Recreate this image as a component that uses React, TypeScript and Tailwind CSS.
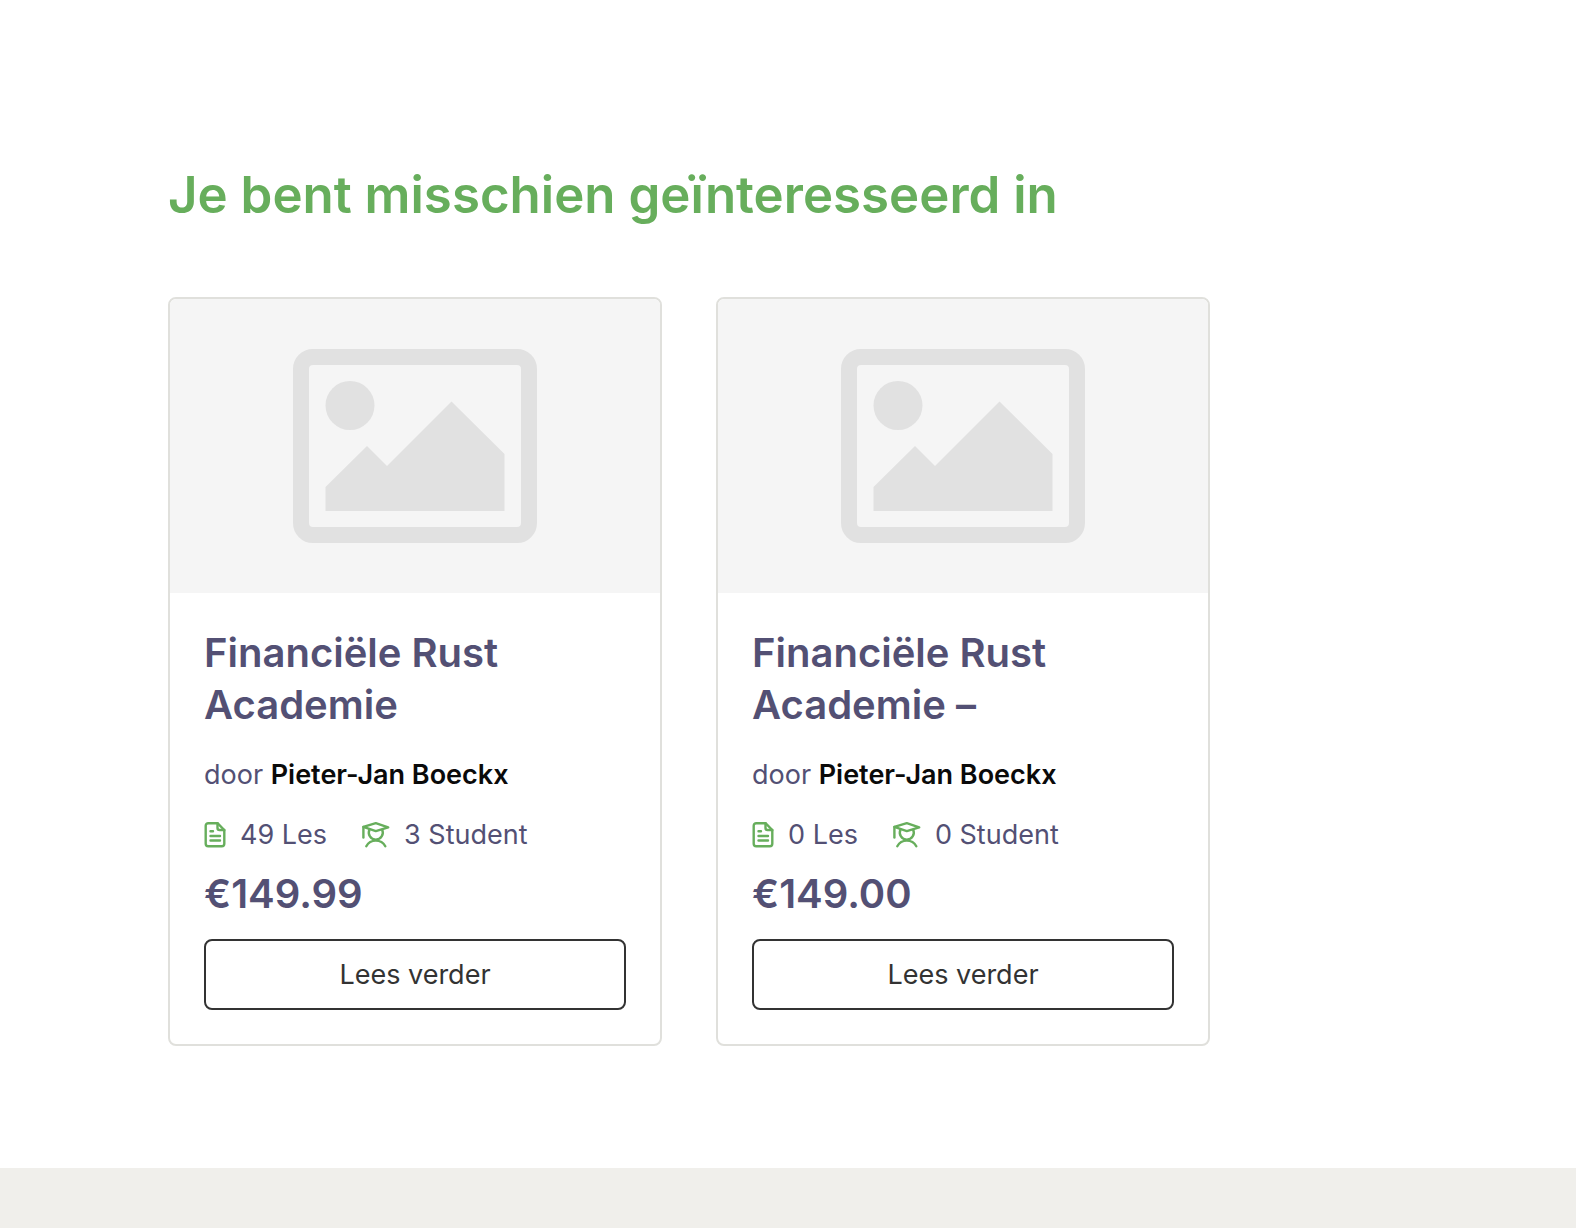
import React from 'react';

interface Course {
  title: string;
  author: string;
  lessons: number;
  students: number;
  price: string;
}

const courses: Course[] = [
  {
    title: 'Financiële Rust Academie',
    author: 'Pieter-Jan Boeckx',
    lessons: 49,
    students: 3,
    price: '€149.99',
  },
  {
    title: 'Financiële Rust Academie –',
    author: 'Pieter-Jan Boeckx',
    lessons: 0,
    students: 0,
    price: '€149.00',
  },
];

const PlaceholderImage: React.FC = () => (
  <svg viewBox="0 0 490 294" className="block w-full bg-[#f5f5f5]" aria-hidden="true">
    <rect x="131" y="58" width="228" height="178" rx="12" fill="none" stroke="#e1e1e1" strokeWidth="16" />
    <circle cx="180" cy="106.5" r="24.5" fill="#e1e1e1" />
    <path d="M155.5 188 197 147 217 167 281.5 102.5 334.5 155v57h-179z" fill="#e1e1e1" />
  </svg>
);

const LessonIcon: React.FC = () => (
  <svg
    width="22"
    height="26"
    viewBox="0 0 22 26"
    fill="none"
    stroke="#67ae5c"
    strokeWidth="2.4"
    strokeLinecap="round"
    strokeLinejoin="round"
    aria-hidden="true"
  >
    <path d="M13.5 1.2H4.2a2.5 2.5 0 0 0-2.5 2.5v18a2.5 2.5 0 0 0 2.5 2.5h13.6a2.5 2.5 0 0 0 2.5-2.5V8z" />
    <path d="M13.5 1.2V6a2 2 0 0 0 2 2h4.8" />
    <path d="M6.5 9.3H9M6.5 14H16M6.5 18.5H16" />
  </svg>
);

const StudentIcon: React.FC = () => (
  <svg
    width="28"
    height="26"
    viewBox="0 0 28 26"
    fill="none"
    stroke="#67ae5c"
    strokeWidth="2.4"
    strokeLinecap="round"
    strokeLinejoin="round"
    aria-hidden="true"
  >
    <path d="M1.4 4.9 13.8 1.2l12.4 4.1-12.4 3.8z" />
    <path d="M1.4 4.9v10.6" />
    <path d="M7.4 7.800a7 7 0 1 0 12.800 0" />
    <path d="M4.300 24.300c1.800-3.400 5.300-5.700 9.500-5.700s7.700 2.300 9.500 5.700" />
  </svg>
);

const CourseCard: React.FC<{ course: Course }> = ({ course }) => (
  <article className="flex flex-col overflow-hidden rounded-lg border-2 border-[#e0e0dc] bg-white">
    <PlaceholderImage />

    <div className="flex flex-1 flex-col p-[34px]">
      <h3 className="text-[40px] leading-[52px] font-semibold text-[#535074]">{course.title}</h3>

      <p className="mt-[26px] text-[27px] leading-[36px] text-[#535074]">
        door <strong className="font-semibold text-[#0a0a0a]">{course.author}</strong>
      </p>

      <ul className="mt-6 flex gap-[35px] text-[27px] leading-[36px] text-[#535074]">
        <li className="flex items-center gap-[14px]">
          <LessonIcon />
          {course.lessons} Les
        </li>
        <li className="flex items-center gap-[14px]">
          <StudentIcon />
          {course.students} Student
        </li>
      </ul>

      <p className="mt-[15px] text-[40px] leading-[52px] font-semibold text-[#535074]">{course.price}</p>

      <button
        type="button"
        className="mt-[19px] h-[71px] w-full rounded-lg border-2 border-[#333333] text-[27px] leading-[36px] text-[#333333]"
      >
        Lees verder
      </button>
    </div>
  </article>
);

export default function App() {
  return (
    <div className="flex min-h-screen flex-col bg-white font-['Inter',sans-serif]">
      <main className="px-[168px] pt-[163px] pb-[122px]">
        <h2 className="text-[51px] leading-[64px] font-semibold text-[#67ae5c]">
          Je bent misschien geïnteresseerd in
        </h2>

        <div className="mt-[70px] grid max-w-[1042px] grid-cols-2 gap-[54px]">
          {courses.map((course) => (
            <CourseCard key={course.title} course={course} />
          ))}
        </div>
      </main>

      <footer className="min-h-[60px] flex-1 bg-[#f0efeb]" />
    </div>
  );
}
